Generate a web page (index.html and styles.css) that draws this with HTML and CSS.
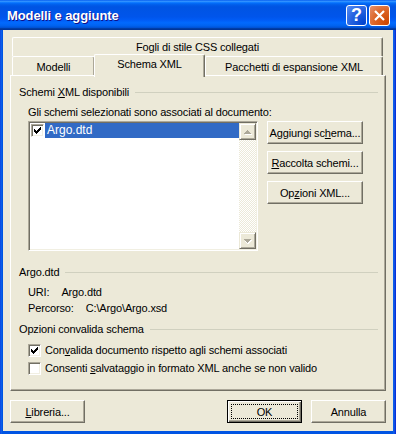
FILE: index.html
```html
<!DOCTYPE html>
<html lang="it">
<head>
    <meta charset="UTF-8">
    <title>Modelli e aggiunte</title>
    <link rel="stylesheet" href="styles.css">
</head>
<body>
    <div class="window">
        <!-- Title bar -->
        <div class="titlebar">
            <span class="title">Modelli e aggiunte</span>
            <div class="caption-buttons">
                <div class="cap help">?</div>
                <div class="cap close">
                    <svg width="19" height="19" viewBox="0 0 19 19">
                        <path d="M5 5 L14 14 M14 5 L5 14" stroke="#fff" stroke-width="2.2" fill="none"/>
                    </svg>
                </div>
            </div>
        </div>

        <div class="client">
            <!-- Tabs -->
            <div class="tabs">
                <div class="tab-row">
                    <div class="tab tab-back">Fogli di stile CSS collegati</div>
                </div>
                <div class="tab-row">
                    <div class="tab tab-modelli">Modelli</div>
                    <div class="tab tab-active">Schema XML</div>
                    <div class="tab tab-pacchetti">Pacchetti di espansione XML</div>
                </div>
            </div>

            <div class="panel">
                <div class="group-title"><span>Schemi <u>X</u>ML disponibili</span></div>
                <div class="indent caption">Gli schemi selezionati sono associati al documento:</div>

                <div class="schema-row">
                    <div class="listbox">
                        <div class="list-items">
                            <div class="list-item">
                                <span class="checkbox checked">
                                    <svg width="9" height="9" viewBox="2 2 9 9"><path d="M3 5H4V6H5V7H6V6H7V5H8V4H9V3H10V6H9V7H8V8H7V9H6V10H5V9H4V8H3Z" fill="#000"/></svg>
                                </span>
                                <span class="item-text selected">Argo.dtd</span>
                            </div>
                        </div>
                        <div class="scrollbar">
                            <div class="scroll-btn">
                                <svg width="15" height="15" viewBox="0 0 15 15">
                                    <path d="M8 7h1v1h1v1h1v1h1v1H5V10h1V9h1V8h1z" fill="#fff"/>
                                    <path d="M7 6h1v1h1v1h1v1h1v1H4V9h1V8h1V7h1z" fill="#ACA899"/>
                                </svg>
                            </div>
                            <div class="scroll-track"></div>
                            <div class="scroll-btn">
                                <svg width="15" height="15" viewBox="0 0 15 15">
                                    <path d="M5 7h7v1h-1v1h-1v1h-1v1H8v1H8V11H7V10H6V9H5V8H5z" fill="#fff"/>
                                    <path d="M4 6h7v1h-1v1H9v1H8v1H7V9H6V8H5V7H4z" fill="#ACA899"/>
                                </svg>
                            </div>
                        </div>
                    </div>
                    <div class="side-buttons">
                        <button class="btn wide">Aggiungi sc<u>h</u>ema...</button>
                        <button class="btn wide"><u>R</u>accolta schemi...</button>
                        <button class="btn wide">Op<u>z</u>ioni XML...</button>
                    </div>
                </div>

                <div class="group-title gap-lg"><span>Argo.dtd</span></div>
                <div class="indent info first">URI:<span class="value">Argo.dtd</span></div>
                <div class="indent info">Percorso:<span class="value">C:\Argo\Argo.xsd</span></div>

                <div class="group-title gap-md"><span>Opzioni convalida schema</span></div>
                <label class="indent check-row first">
                    <span class="checkbox checked">
                        <svg width="9" height="9" viewBox="2 2 9 9"><path d="M3 5H4V6H5V7H6V6H7V5H8V4H9V3H10V6H9V7H8V8H7V9H6V10H5V9H4V8H3Z" fill="#000"/></svg>
                    </span>
                    <span>Con<u>v</u>alida documento rispetto agli schemi associati</span>
                </label>
                <label class="indent check-row">
                    <span class="checkbox"></span>
                    <span>Consenti <u>s</u>alvataggio in formato XML anche se non valido</span>
                </label>
            </div>

            <!-- Dialog buttons -->
            <div class="footer">
                <button class="btn"><u>L</u>ibreria...</button>
                <div class="spacer"></div>
                <button class="btn default">OK</button>
                <button class="btn">Annulla</button>
            </div>
        </div>
    </div>
</body>
</html>
```

FILE: styles.css
```css
body {
    margin: 0;
    background: #0054E3;
    font-family: "Liberation Sans", Arial, sans-serif;
    font-size: 11px;
    letter-spacing: -0.15px;
    color: #000;
}

.window {
    width: 396px;
    height: 434px;
    display: flex;
    flex-direction: column;
    background: linear-gradient(to right, #0831D9 0, #166AEE 1px, #0054E3 2px, #0054E3 393px, #166AEE 394px, #0831D9 395px);
}

/* Title bar */
.titlebar {
    height: 30px;
    box-sizing: border-box;
    display: flex;
    align-items: center;
    padding: 1px 6px 0 7px;
    background: linear-gradient(to bottom, #0058EE 0%, #3593FF 4%, #288EFF 6%, #127DFF 8%, #036FFC 10%, #0262EE 14%, #0057E5 20%, #0054E3 24%, #0055EB 56%, #005BF5 66%, #026AFE 76%, #0062EF 86%, #0052D6 92%, #0040AB 94%, #003092 100%);
}

.title {
    flex: 1;
    color: #fff;
    font-weight: bold;
    font-size: 13px;
    letter-spacing: -0.1px;
    text-shadow: 1px 1px #0F1089;
}

.caption-buttons {
    display: flex;
    gap: 2px;
}

.cap {
    width: 21px;
    height: 21px;
    box-sizing: border-box;
    border: 1px solid #fff;
    border-radius: 3px;
    display: flex;
    align-items: center;
    justify-content: center;
}

.help {
    background: radial-gradient(circle at 90% 90%, #0043CF 0%, #2663E0 55%, #5A8FF5 100%);
    color: #fff;
    font-weight: bold;
    font-size: 18px;
    line-height: 19px;
}

.close {
    background: radial-gradient(circle at 90% 90%, #CC4600 0%, #DC6527 55%, #E59270 100%);
}

/* Client area */
.client {
    flex: 1;
    margin: 0 3px 3px;
    background: #ECE9D8;
    padding: 7px 7px 0;
}

/* Tabs */
.tabs {
    padding: 0 3px 0 2px;
}

.tab-row {
    display: flex;
    align-items: flex-end;
    height: 19px;
}

.tab {
    box-sizing: border-box;
    height: 19px;
    border-top: 1px solid #fff;
    border-left: 1px solid #fff;
    border-right: 1px solid #716F64;
    border-radius: 2px 2px 0 0;
    box-shadow: inset -1px 0 #ACA899;
    background: #ECE9D8;
    text-align: center;
    line-height: 18px;
}

.tab-back {
    width: 371px;
}

.tab-modelli {
    width: 83px;
    line-height: 20px;
}

.tab-active {
    position: relative;
    z-index: 1;
    width: 111px;
    height: 23px;
    margin-left: -1px;
    margin-bottom: -2px;
    line-height: 19px;
}

.tab-pacchetti {
    width: 178px;
    line-height: 20px;
}

/* Page panel */
.panel {
    height: 316px;
    box-sizing: border-box;
    border: 1px solid;
    border-color: #fff #716F64 #716F64 #fff;
    box-shadow: inset -1px -1px #ACA899;
    padding: 10px 7px 0 8px;
}

.group-title {
    display: flex;
    align-items: center;
    height: 13px;
    line-height: 13px;
    white-space: nowrap;
}

.group-title::after {
    content: "";
    flex: 1;
    margin-left: 6px;
    border-top: 1px solid #D0D0BF;
}

.gap-lg {
    margin-top: 15px;
}

.gap-md {
    margin-top: 8px;
}

.indent {
    padding-left: 9px;
}

.caption {
    margin-top: 7px;
    line-height: 13px;
}

.schema-row {
    display: flex;
    gap: 9px;
    margin-top: 2px;
    padding-left: 9px;
}

/* List box */
.listbox {
    width: 230px;
    height: 130px;
    box-sizing: border-box;
    border: 1px solid;
    border-color: #ACA899 #fff #fff #ACA899;
    box-shadow: inset 1px 1px #716F64, inset -1px -1px #F1EFE2;
    padding: 1px;
    background: #fff;
    display: flex;
}

.list-items {
    flex: 1;
}

.list-item {
    display: flex;
    height: 15px;
    align-items: center;
    padding-left: 1px;
}

.item-text {
    flex: 1;
    height: 15px;
    line-height: 15px;
    margin-left: 1px;
    padding-left: 2px;
    font-size: 12px;
    letter-spacing: 0;
}

.selected {
    background: #316AC5;
    color: #fff;
}

.checkbox {
    width: 13px;
    height: 13px;
    box-sizing: border-box;
    flex: none;
    border: 1px solid;
    border-color: #ACA899 #fff #fff #ACA899;
    box-shadow: inset 1px 1px #716F64, inset -1px -1px #F1EFE2;
    background: #fff;
    display: flex;
    align-items: center;
    justify-content: center;
}

.scrollbar {
    width: 17px;
    display: flex;
    flex-direction: column;
}

.scroll-btn {
    height: 17px;
    box-sizing: border-box;
    border: 1px solid;
    border-color: #ECE9D8 #716F64 #716F64 #ECE9D8;
    box-shadow: inset 1px 1px #fff, inset -1px -1px #ACA899;
    background: #ECE9D8;
}

.scroll-btn svg {
    display: block;
}

.scroll-track {
    flex: 1;
    background: repeating-conic-gradient(#fff 0 25%, #ECE9D8 0 50%) 0 0 / 2px 2px;
}

/* Buttons */
.side-buttons {
    display: flex;
    flex-direction: column;
    gap: 7px;
}

.btn {
    position: relative;
    width: 75px;
    height: 23px;
    box-sizing: border-box;
    border: 1px solid;
    border-color: #fff #716F64 #716F64 #fff;
    box-shadow: inset -1px -1px #ACA899;
    background: #ECE9D8;
    font: inherit;
    letter-spacing: inherit;
    color: #000;
    padding: 0;
}

.btn.wide {
    width: 96px;
}

.btn.default {
    border: 1px solid #000;
    box-shadow: inset 1px 1px #fff, inset -1px -1px #716F64, inset -2px -2px #ACA899;
}

.btn.default::after {
    content: "";
    position: absolute;
    inset: 3px;
    border: 1px dotted #000;
}

/* Info lines */
.info {
    line-height: 13px;
    margin-top: 3px;
}

.info.first {
    margin-top: 7px;
}

.value {
    margin-left: 12px;
}

.check-row {
    display: flex;
    align-items: center;
    gap: 4px;
    height: 13px;
    line-height: 13px;
    margin-top: 5px;
}

.check-row.first {
    margin-top: 8px;
}

.footer {
    display: flex;
    gap: 9px;
    margin-top: 9px;
}

.spacer {
    flex: 1;
}
```
